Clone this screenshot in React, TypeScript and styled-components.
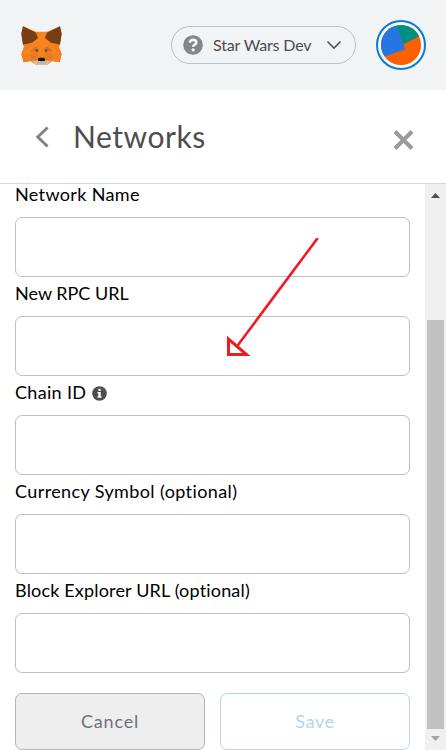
import React from 'react';
import styled, { createGlobalStyle } from 'styled-components';

const GlobalStyle = createGlobalStyle`
  *, *::before, *::after { box-sizing: border-box; }
  html, body { margin: 0; padding: 0; overflow: hidden; background: #fff; }
  body, button, input {
    font-family: Lato, "Liberation Sans", sans-serif;
    font-variant-ligatures: none;
  }
`;

const Popup = styled.div`
  position: relative;
  display: flex;
  flex-direction: column;
  width: 446px;
  height: 750px;
  overflow: hidden;
  background: #fff;
`;

const AppHeader = styled.header`
  display: flex;
  align-items: center;
  flex: none;
  height: 90px;
  padding: 0 20px 0 21px;
  background: #f2f3f4;
`;

const Fox = styled.svg`
  width: 41px;
  height: 39px;
  flex: none;
`;

const NetworkPicker = styled.button`
  display: flex;
  align-items: center;
  width: 185px;
  height: 38px;
  margin-left: auto;
  padding: 0 13px 0 11px;
  border: 1px solid #bbc0c5;
  border-radius: 19px;
  background: transparent;
  color: #4d4d4d;
`;

const PickerName = styled.span`
  margin-left: 10px;
  flex: 1;
  text-align: left;
  font-size: 16px;
  line-height: 20px;
  letter-spacing: -0.15px;
  white-space: nowrap;
`;

const Account = styled.button`
  display: grid;
  place-items: center;
  width: 50px;
  height: 50px;
  margin-left: 20px;
  padding: 0;
  border: 2px solid #037dd6;
  border-radius: 50%;
  background: #f8f9fa;
`;

const Icon = styled.svg`
  display: block;
  flex: none;
`;

const TitleBar = styled.div`
  display: flex;
  align-items: center;
  flex: none;
  height: 94px;
  padding: 0 32px 0 35px;
  border-bottom: 1px solid #d2d8dd;
`;

const Title = styled.h1`
  margin: 0 auto 2px 23px;
  color: #4d4d4d;
  font-size: 30px;
  font-weight: 400;
  line-height: 40px;
  letter-spacing: 0.55px;
`;

const IconButton = styled.button`
  display: block;
  padding: 0;
  border: 0;
  background: none;
`;

const CloseButton = styled(IconButton)`
  margin-top: 7px;
`;

const Content = styled.main`
  display: flex;
  flex: 1;
  min-height: 0;
`;

const Form = styled.form`
  flex: 1;
  padding: 0 15px;
  overflow: hidden;
`;

const Fields = styled.div`
  margin-top: -6px;
`;

const Label = styled.label`
  display: flex;
  align-items: center;
  height: 39px;
  padding-bottom: 7px;
  color: #000;
  font-size: 18px;
  line-height: 24px;
`;

const LabelText = styled.span<{ $spacing: number }>`
  letter-spacing: ${(p) => p.$spacing}px;
  white-space: nowrap;
`;

const InfoIcon = styled(Icon)`
  margin: 2px 0 0 6px;
`;

const Input = styled.input`
  display: block;
  width: 100%;
  height: 60px;
  padding: 0 12px;
  border: 1px solid #bbc0c5;
  border-radius: 7px;
  outline: 0;
  background: #fff;
  font-size: 18px;
`;

const Actions = styled.div`
  display: flex;
  gap: 15px;
  margin-top: 20px;
`;

const Button = styled.button<{ $primary?: boolean }>`
  flex: 1;
  height: 57px;
  padding: 0 0 2px;
  border: 1px solid ${(p) => (p.$primary ? '#b0d8f3' : '#b3b4b5')};
  border-radius: 7px;
  background: ${(p) => (p.$primary ? '#fff' : '#eee')};
  color: ${(p) => (p.$primary ? '#acd6f3' : '#6a737d')};
  font-size: 18px;
  line-height: 24px;
  letter-spacing: ${(p) => (p.$primary ? 0.6 : 0.8)}px;
`;

const Scrollbar = styled.div`
  display: flex;
  flex-direction: column;
  width: 21px;
  flex: none;
  padding: 0 2px;
  background: #f0f0f0;
`;

const ScrollArrow = styled.svg`
  width: 17px;
  height: 21px;
  flex: none;
`;

const Thumb = styled.div`
  width: 17px;
  height: 409px;
  margin-top: auto;
  background: #c1c1c1;
`;

const Pointer = styled.svg`
  position: absolute;
  left: 220px;
  top: 230px;
  pointer-events: none;
`;

const fields = [
  { label: 'Network Name', spacing: 0.35 },
  { label: 'New RPC URL', spacing: 0 },
  { label: 'Chain ID', spacing: 0.32, info: true },
  { label: 'Currency Symbol (optional)', spacing: 0.39 },
  { label: 'Block Explorer URL (optional)', spacing: 0.17 },
];

function FoxLogo() {
  return (
    <Fox viewBox="63 46 123 117">
      <path d="M69 47L108 63H141L180 47L185 67L180 101L177 110L185 130L179 155L158 151L141 162H108L91 151L71 155L64 130L72 110L69 101L64 67Z" fill="#f6851b" />
      <path d="M69 47L108 66L114 82L96 96L69 102L64 70ZM180 47L141 66L135 82L153 96L180 102L185 70Z" fill="#763d16" />
      <path d="M72 102L96 96L86 112L72 125L64 130L72 110ZM177 102L153 96L163 112L177 125L185 130L177 110Z" fill="#ee8220" />
      <path d="M64 130L91 130L94 151L71 155ZM185 130L158 130L155 151L179 155Z" fill="#f08022" />
      <path d="M91 130L113 140L94 151ZM158 130L136 140L155 151Z" fill="#e8751f" />
      <path d="M92 120L106 107L118 115L113 125ZM157 120L143 107L131 115L136 125Z" fill="#df6e28" />
      <path d="M92 120L113 125L114 138L95 130ZM157 120L136 125L135 138L154 130Z" fill="#e87b25" />
      <path d="M105 116L112 115L115 122L110 123ZM144 116L137 115L134 122L139 123Z" fill="#3e4650" />
      <path d="M105 115L110 114L111 119ZM144 115L139 114L138 119Z" fill="#8c8983" />
      <path d="M94 148L114 145H135L155 148L141 162H108Z" fill="#d5bfb2" />
      <path d="M93 149L113 139L115 148L104 151ZM156 149L136 139L134 148L145 151Z" fill="#e97b22" />
      <path d="M116 141H133L136 149L132 152H117L113 149Z" fill="#161616" />
      <path d="M111 152H138L138 159H112Z" fill="#c4b1a4" />
    </Fox>
  );
}

export default function App() {
  return (
    <>
      <GlobalStyle />
      <Popup>
        <AppHeader>
          <FoxLogo />
          <NetworkPicker type="button">
            <Icon width="20" height="20" viewBox="0 0 20 20">
              <circle cx="10" cy="10" r="9.8" fill="#848689" />
              <path d="M6.6 7.6C7.2 5.6 8.5 4.9 10.1 4.9C12.2 4.9 13.3 6 13.3 7.5C13.3 9.6 10.2 9.5 10.2 11.8" fill="none" stroke="#f5f6f7" strokeWidth="2.6" />
              <circle cx="10.2" cy="14.9" r="1.7" fill="#f5f6f7" />
            </Icon>
            <PickerName>Star Wars Dev</PickerName>
            <Icon width="16" height="10" viewBox="0 0 16 10">
              <path d="M1.5 1.5L8 8L14.5 1.5" fill="none" stroke="#535559" strokeWidth="1.6" />
            </Icon>
          </NetworkPicker>
          <Account type="button" aria-label="Account">
            <Icon width="40" height="40" viewBox="0 0 40 40">
              <clipPath id="avatar"><circle cx="20" cy="20" r="20" /></clipPath>
              <g clipPath="url(#avatar)">
                <path d="M0 0H40V40H0Z" fill="#fa5f00" />
                <path d="M13 -4L22.2 19.3L23.5 18.7L42 9.3V-4Z" fill="#018e83" />
                <path d="M13.2 -4L24.2 24.2L-2 33.5V-4Z" fill="#2575e2" />
              </g>
            </Icon>
          </Account>
        </AppHeader>
        <TitleBar>
          <IconButton type="button" aria-label="Back">
            <Icon width="15" height="24" viewBox="0 0 15 24">
              <path d="M12.6 2.5L2.8 12L12.6 21.5" fill="none" stroke="#808285" strokeWidth="3" />
            </Icon>
          </IconButton>
          <Title>Networks</Title>
          <CloseButton type="button" aria-label="Close">
            <Icon width="21" height="20" viewBox="0 0 21 20">
              <path d="M2 1.5L19 18.5M19 1.5L2 18.5" fill="none" stroke="#9b9b9b" strokeWidth="4" />
            </Icon>
          </CloseButton>
        </TitleBar>
        <Content>
          <Form>
            <Fields>
              {fields.map((f) => (
                <React.Fragment key={f.label}>
                  <Label htmlFor={f.label}>
                    <LabelText $spacing={f.spacing}>{f.label}</LabelText>
                    {f.info && (
                      <InfoIcon width="15" height="15" viewBox="0 0 15 15">
                        <circle cx="7.5" cy="7.5" r="7.3" fill="#4d4d4d" />
                        <path d="M6.4 2.8H8.7V5H6.4ZM5.5 6.1H8.7V10.2H9.5V11.7H5.5V10.2H6.4V7.6H5.5Z" fill="#fff" />
                      </InfoIcon>
                    )}
                  </Label>
                  <Input id={f.label} />
                </React.Fragment>
              ))}
            </Fields>
            <Actions>
              <Button type="button">Cancel</Button>
              <Button type="button" $primary>Save</Button>
            </Actions>
          </Form>
          <Scrollbar>
            <ScrollArrow viewBox="0 0 17 21">
              <path d="M4 14H13L8.5 9Z" fill="#505050" />
            </ScrollArrow>
            <Thumb />
            <ScrollArrow viewBox="0 0 17 21">
              <path d="M4 7H13L8.5 12Z" fill="#a3a3a3" />
            </ScrollArrow>
          </Scrollbar>
        </Content>
        <Pointer width="110" height="130" viewBox="0 0 110 130">
          <path d="M97 9L18 115" fill="none" stroke="#ed1c24" strokeWidth="2.6" strokeLinecap="round" />
          <path d="M8.5 109V124.5H26.5Z" fill="none" stroke="#ed1c24" strokeWidth="3" />
        </Pointer>
      </Popup>
    </>
  );
}
